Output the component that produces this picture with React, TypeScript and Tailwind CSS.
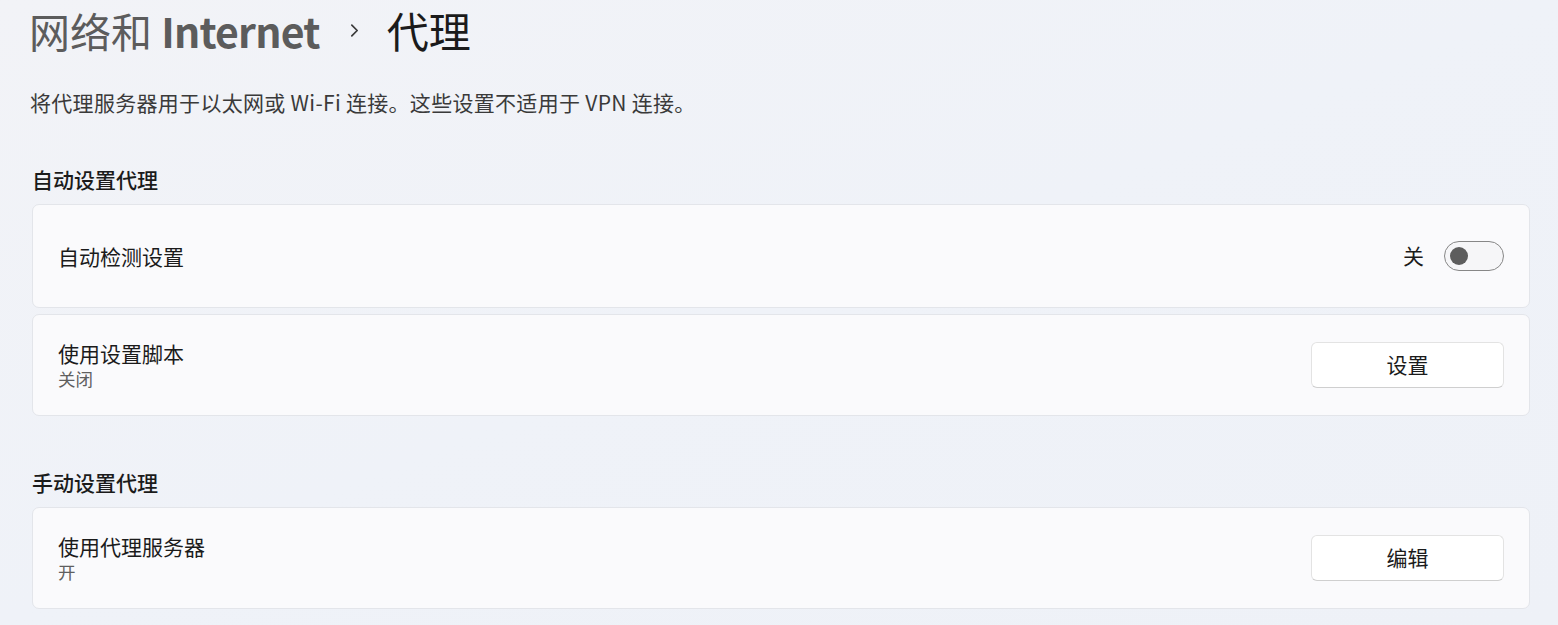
import React from 'react';

const font = { fontFamily: '"Noto Sans CJK SC", "Noto Sans", sans-serif' };

function Toggle() {
  return (
    <div className="flex items-center gap-[20px]">
      <span className="text-[21px] text-[#1b1b1b]">关</span>
      <div className="flex h-[30px] w-[60px] items-center rounded-full border-[1.5px] border-[#878787] bg-[#f6f6f8] pl-[5px]">
        <div className="h-[18px] w-[18px] rounded-full bg-[#5d5d5d]" />
      </div>
    </div>
  );
}

function Btn({ label }: { label: string }) {
  return (
    <button className="h-[46px] w-[193px] rounded-[6px] border border-[#e3e3e3] border-b-[#cfcfcf] bg-white text-[21px] text-[#1b1b1b]">
      {label}
    </button>
  );
}

function Card({ title, sub, right, h }: { title: string; sub?: string; right: React.ReactNode; h: string }) {
  return (
    <div className={`flex ${h} items-center justify-between rounded-[7px] border border-[#e3e5ea] bg-[#fafafc] pl-[25px] pr-[25px]`}>
      <div className="flex flex-col">
        <span className="text-[21px] leading-[26px] text-[#1b1b1b]">{title}</span>
        {sub && <span className="mt-[2px] text-[17.5px] leading-[22px] text-[#5f5f5f]">{sub}</span>}
      </div>
      {right}
    </div>
  );
}

export default function App() {
  return (
    <div
      style={font}
      className="h-[625px] w-full overflow-hidden bg-gradient-to-br from-[#f2f3f7] via-[#eff2f8] to-[#eef1f7] pl-[32px] pr-[28px] pt-[4px]"
    >
      <div className="-ml-[3px] flex items-center text-[41px] leading-[52px]">
        <span className="text-[#5c5c5c]">网络和 <span className="font-semibold tracking-[-0.8px]">Internet</span></span>
        <svg className="ml-[27px] mr-[25px] h-[15px] w-[15px]" viewBox="0 0 14 14" fill="none">
          <path d="M4.5 2 L9.5 7 L4.5 12" stroke="#3a3a3a" strokeWidth="1.6" strokeLinecap="round" strokeLinejoin="round" />
        </svg>
        <span className="text-[42px] text-[#1b1b1b]">代理</span>
      </div>

      <p className="-ml-[2px] mt-[32px] text-[21px] leading-[28px] tracking-[0.3px] text-[#3a3a3a]">
        将代理服务器用于以太网或 Wi-Fi 连接。这些设置不适用于 VPN 连接。
      </p>

      <h2 className="mt-[49px] text-[21px] leading-[28px] text-[#1b1b1b] [font-weight:500]">自动设置代理</h2>
      <div className="mt-[11px] flex flex-col gap-[6px]">
        <Card title="自动检测设置" right={<Toggle />} h="h-[104px]" />
        <Card title="使用设置脚本" sub="关闭" right={<Btn label="设置" />} h="h-[102px]" />
      </div>

      <h2 className="mt-[52px] text-[21px] leading-[28px] text-[#1b1b1b] [font-weight:500]">手动设置代理</h2>
      <div className="mt-[11px] flex flex-col gap-[6px]">
        <Card title="使用代理服务器" sub="开" right={<Btn label="编辑" />} h="h-[102px]" />
      </div>
    </div>
  );
}
